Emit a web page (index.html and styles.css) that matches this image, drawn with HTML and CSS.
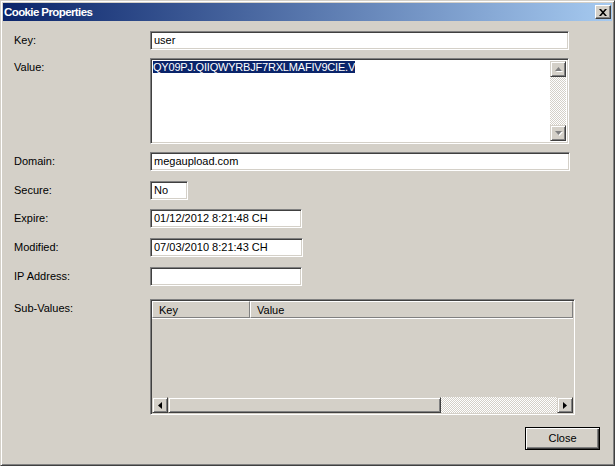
FILE: index.html
```html
<html>
<head>
<meta charset="utf-8">
<link rel="stylesheet" href="styles.css">
</head>
<body>
<div class="window">
  <div class="titlebar">
    <span class="title">Cookie Properties</span>
    <div class="tb-close">
      <svg width="8" height="7" viewBox="0 0 8 7"><path d="M0 0h2l2 2.2L6 0h2L5 3.5 8 7H6L4 4.8 2 7H0l3-3.5z" fill="#000"/></svg>
    </div>
  </div>

  <div class="content">
    <div class="row row-key">
      <div class="label">Key:</div>
      <div class="field w-wide">user</div>
    </div>

    <div class="row row-value">
      <div class="label">Value:</div>
      <div class="field textarea w-wide">
        <div class="textarea-text"><span class="selected">QY09PJ.QIIQWYRBJF7RXLMAFIV9CIE.V</span></div>
        <div class="vscroll">
          <div class="sbtn"><svg width="7" height="5" viewBox="0 0 7 5"><path d="M3.5 0L7 4H0z" fill="#808080"/></svg></div>
          <div class="track"></div>
          <div class="sbtn"><svg width="7" height="5" viewBox="0 0 7 5"><path d="M0 0h7L3.5 4z" fill="#808080"/></svg></div>
        </div>
      </div>
    </div>

    <div class="row row-domain">
      <div class="label">Domain:</div>
      <div class="field w-domain">megaupload.com</div>
    </div>

    <div class="row row-secure">
      <div class="label">Secure:</div>
      <div class="field w-secure">No</div>
    </div>

    <div class="row row-expire">
      <div class="label">Expire:</div>
      <div class="field w-date">01/12/2012 8:21:48 CH</div>
    </div>

    <div class="row row-modified">
      <div class="label">Modified:</div>
      <div class="field w-date2">07/03/2010 8:21:43 CH</div>
    </div>

    <div class="row row-ip">
      <div class="label">IP Address:</div>
      <div class="field w-date"></div>
    </div>

    <div class="row row-sub">
      <div class="label">Sub-Values:</div>
      <div class="listview">
        <div class="lv-header">
          <div class="lv-col col-key">Key</div>
          <div class="lv-col col-value">Value</div>
        </div>
        <div class="lv-body"></div>
        <div class="hscroll">
          <div class="sbtn"><svg width="4" height="7" viewBox="0 0 4 7"><path d="M4 0v7L0 3.5z" fill="#000"/></svg></div>
          <div class="thumb"></div>
          <div class="track"></div>
          <div class="sbtn"><svg width="4" height="7" viewBox="0 0 4 7"><path d="M0 0v7L4 3.5z" fill="#000"/></svg></div>
        </div>
      </div>
    </div>

    <div class="buttons">
      <div class="button">Close</div>
    </div>
  </div>
</div>
</body>
</html>
```

FILE: styles.css
```css
* {
    box-sizing: border-box;
}

body {
    margin: 0;
    background: #d4d0c8;
    font-family: "Liberation Sans", Arial, sans-serif;
    font-size: 11px;
    color: #000;
}

.window {
    width: 615px;
    height: 466px;
    border: 1px solid;
    border-color: #d4d0c8 #404040 #404040 #d4d0c8;
    box-shadow: inset 1px 1px #fff, inset -1px -1px #808080;
    padding: 2px;
    background: #d4d0c8;
    display: flex;
    flex-direction: column;
}

.titlebar {
    height: 18px;
    flex-shrink: 0;
    display: flex;
    align-items: center;
    justify-content: space-between;
    background: linear-gradient(to right, #0a246a, #a6caf0);
}

.title {
    color: #fff;
    font-weight: bold;
    font-size: 11.5px;
    letter-spacing: -0.6px;
    padding-left: 1px;
}

.tb-close {
    width: 16px;
    height: 14px;
    margin-right: 1px;
    background: #d4d0c8;
    border: 1px solid;
    border-color: #fff #404040 #404040 #fff;
    box-shadow: inset -1px -1px #808080;
    display: flex;
    align-items: center;
    justify-content: center;
}

.content {
    flex: 1;
    padding: 0 0 0 11px;
}

.row {
    display: flex;
    align-items: flex-start;
}

.label {
    width: 136px;
    padding-top: 2px;
    line-height: 15px;
}

.row-key { margin-top: 10px; }
.row-value { margin-top: 8px; }
.row-domain { margin-top: 8px; }
.row-secure { margin-top: 10px; }
.row-expire { margin-top: 9px; }
.row-modified { margin-top: 10px; }
.row-ip { margin-top: 10px; }
.row-sub { margin-top: 13px; }

.field {
    height: 19px;
    background: #fff;
    border: 1px solid;
    border-color: #808080 #fff #fff #808080;
    box-shadow: inset 1px 1px #404040, inset -1px -1px #d4d0c8;
    padding: 1px 2px 0 3px;
    line-height: 15px;
    white-space: nowrap;
    overflow: hidden;
}

.w-wide { width: 419px; }
.w-domain { width: 420px; }
.w-secure { width: 38px; }
.w-date { width: 152px; }
.w-date2 { width: 153px; }

.textarea {
    height: 86px;
    display: flex;
    padding: 2px;
}

.textarea-text {
    flex: 1;
    line-height: 13px;
    letter-spacing: -0.2px;
}

.selected {
    background: #0a246a;
    color: #fff;
}

.vscroll {
    width: 16px;
    display: flex;
    flex-direction: column;
}

.track {
    flex: 1;
    background-color: #fff;
    background-image: repeating-conic-gradient(#d4d0c8 0 25%, #fff 0 50%);
    background-size: 2px 2px;
}

.sbtn {
    width: 16px;
    height: 16px;
    flex-shrink: 0;
    background: #d4d0c8;
    border: 1px solid;
    border-color: #d4d0c8 #404040 #404040 #d4d0c8;
    box-shadow: inset 1px 1px #fff, inset -1px -1px #808080;
    display: flex;
    align-items: center;
    justify-content: center;
}

.vscroll .sbtn svg {
    filter: drop-shadow(1px 1px 0 #fff);
}

.listview {
    width: 425px;
    height: 116px;
    border: 1px solid;
    border-color: #808080 #fff #fff #808080;
    box-shadow: inset 1px 1px #404040, inset -1px -1px #d4d0c8;
    padding: 1px;
    display: flex;
    flex-direction: column;
}

.lv-header {
    display: flex;
    height: 17px;
    flex-shrink: 0;
}

.lv-col {
    height: 17px;
    line-height: 16px;
    padding-left: 6px;
    border: 1px solid;
    border-color: #fff #808080 #808080 #fff;
    box-shadow: inset -1px 0 #d4d0c8;
}

.col-key { width: 98px; }
.col-value { flex: 1; }

.lv-body {
    flex: 1;
    border-top: 1px solid #fff;
}

.hscroll {
    height: 16px;
    display: flex;
    flex-shrink: 0;
}

.hscroll .thumb {
    width: 273px;
    background: #d4d0c8;
    border: 1px solid;
    border-color: #d4d0c8 #404040 #404040 #d4d0c8;
    box-shadow: inset 1px 1px #fff, inset -1px -1px #808080;
}

.buttons {
    display: flex;
    justify-content: flex-end;
    padding-right: 12px;
    margin-top: 12px;
}

.button {
    width: 75px;
    height: 23px;
    border: 1px solid #000;
    box-shadow: inset 1px 1px #fff, inset -1px -1px #404040, inset -2px -2px #808080;
    text-align: center;
    line-height: 20px;
    font-size: 11px;
}
```
